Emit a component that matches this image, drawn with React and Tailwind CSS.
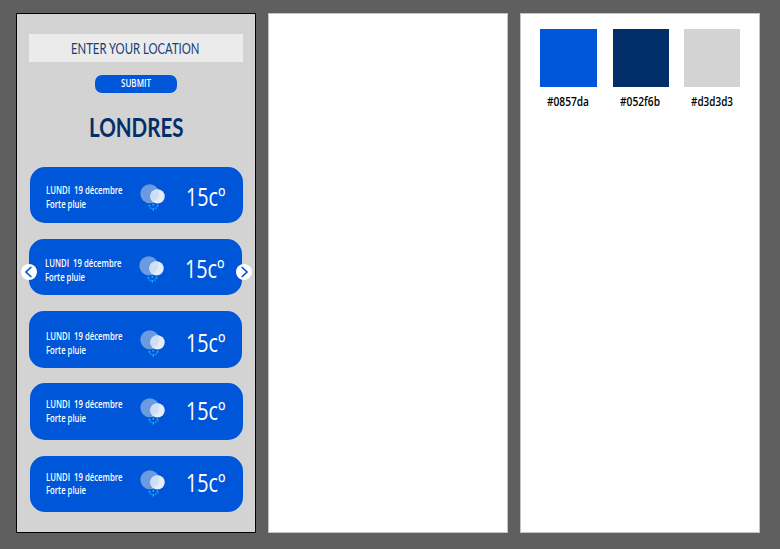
import { useLayoutEffect, useRef } from "react";

// Condenses a line of text horizontally so that it fills the given width.
function Condensed({ width, className = "", children }) {
  const ref = useRef(null);
  useLayoutEffect(() => {
    const el = ref.current;
    el.style.transform = "none";
    el.style.transform = `scaleX(${width / el.getBoundingClientRect().width})`;
  }, [width, children]);
  return (
    <span className={`block ${className}`} style={{ width }}>
      <span ref={ref} className="inline-block origin-left whitespace-pre">
        {children}
      </span>
    </span>
  );
}

function RainIcon() {
  return (
    <svg width="26" height="28" viewBox="0 0 26 28" className="block shrink-0">
      <circle cx="9.8" cy="9.8" r="9.5" fill="#6b9ae0" />
      <circle cx="17.5" cy="12.4" r="7.2" fill="#e4ecfa" />
      <path d="M12.7 7a7.2 7.2 0 0 0 0 10.7a9.5 9.5 0 0 0 6.5-6.8a9.5 9.5 0 0 0-1.2-5.5a7.2 7.2 0 0 0-5.3 1.6z" fill="#d0def5" />
      <g stroke="#14b4fc" strokeWidth="1.6">
        <path d="M13.3 19.7v2M13.3 24v2.4M9.4 20.8v2M17.5 20.8v2M10.8 23.4v1.4M15.8 23.4v1.4" />
      </g>
    </svg>
  );
}

function Arrow({ d, className }) {
  return (
    <button className={`absolute size-4 rounded-full bg-white ${className}`}>
      <svg width="16" height="16" viewBox="0 0 16 16" fill="none" stroke="#0857c8" strokeWidth="1.7">
        <path d={d} />
      </svg>
    </button>
  );
}

const days = [
  { card: "ml-[13px]", body: "pt-[17px] pl-[16px]", text: "-mt-[0.5px]", line: "h-3.5" },
  { card: "ml-3", body: "pt-[17.5px] pl-[16px]", text: "mt-0", line: "h-3.5", arrows: true },
  { card: "ml-3", body: "pt-[18.5px] pl-[17px]", text: "-mt-[0.5px]", line: "h-3.5" },
  { card: "ml-[13px]", body: "pt-[14.3px] pl-[16px]", text: "-mt-[0.5px]", line: "h-3.5" },
  { card: "ml-[13px]", body: "pt-[14.5px] pl-[16px]", text: "mt-0", line: "h-[13px]" },
];

function DayCard({ day }) {
  return (
    <div className={`relative h-[56.7px] w-[213px] shrink-0 rounded-[15px] bg-[#0056d8] ${day.card}`}>
      <div className={`flex items-start text-white ${day.body}`}>
        <div className={`w-[94px] text-[10px] leading-[14px] font-semibold ${day.text}`}>
          <Condensed width={76.5} className={day.line}>{"LUNDI  19 décembre"}</Condensed>
          <Condensed width={40} className="h-3.5">Forte pluie</Condensed>
        </div>
        <RainIcon />
        <div className="-mt-px ml-5 flex">
          <Condensed width={32} className="h-7 text-[25px] leading-[27px]">15c</Condensed>
          <Condensed width={7.5} className="h-5 text-[25px] leading-[26px]">º</Condensed>
        </div>
      </div>
      {day.arrows && (
        <>
          <Arrow d="M10.3 3L5 8l5.3 5" className="top-[25px] -left-2" />
          <Arrow d="M5.7 3L11 8l-5.3 5" className="top-[25.5px] -right-[9.5px]" />
        </>
      )}
    </div>
  );
}

const swatches = [
  { color: "bg-[#0056d8]", box: "w-[57px]", name: "#0857da", width: 42, label: "ml-[7px]" },
  { color: "bg-[#022f69]", box: "ml-4 w-14", name: "#052f6b", width: 40, label: "ml-[6.5px]" },
  { color: "bg-[#d3d3d3]", box: "ml-[15px] w-[56px]", name: "#d3d3d3", width: 42, label: "ml-[6.5px]" },
];

export default function App() {
  return (
    <div className="flex h-[549px] w-[780px] gap-3 overflow-hidden bg-[#5f5f5f] pt-[13px] pl-4 font-['Open_Sans',sans-serif]">
      <section className="flex h-[520px] w-60 flex-col border border-black bg-[#d3d3d3]">
        <div className="mt-5 ml-3 flex h-7 w-[214px] shrink-0 bg-[#ebebeb] pl-[41.5px] font-['Lato',sans-serif] text-[15.8px] leading-7 text-[#163d74]">
          <Condensed width={128.5}>ENTER YOUR LOCATION</Condensed>
        </div>
        <button className="mt-[13px] ml-[78px] flex h-[17.5px] w-[82px] shrink-0 rounded-[7px] bg-[#0056d8] pl-[26px] text-left text-[9.8px] leading-[17px] font-semibold text-white">
          <Condensed width={30}>SUBMIT</Condensed>
        </button>
        <h1 className="mt-[18px] ml-[72px] h-8 shrink-0 font-['Lato',sans-serif] text-[26.5px] leading-8 font-bold text-[#022f69]">
          <Condensed width={94.5}>LONDRES</Condensed>
        </h1>
        <div className="mt-6 flex flex-col gap-[15.6px]">
          {days.map((day, i) => (
            <DayCard key={i} day={day} />
          ))}
        </div>
      </section>
      <section className="h-[520px] w-60 border border-[#c4c4c4] bg-white" />
      <section className="h-[520px] w-60 border border-[#c4c4c4] bg-white">
        <div className="flex pt-[15px] pl-[19px]">
          {swatches.map((s) => (
            <div key={s.name} className={s.box}>
              <div className={`h-[57.5px] w-full ${s.color}`} />
              <Condensed width={s.width} className={`mt-[5.5px] text-[12.5px] leading-5 font-semibold text-black ${s.label}`}>{s.name}</Condensed>
            </div>
          ))}
        </div>
      </section>
    </div>
  );
}
